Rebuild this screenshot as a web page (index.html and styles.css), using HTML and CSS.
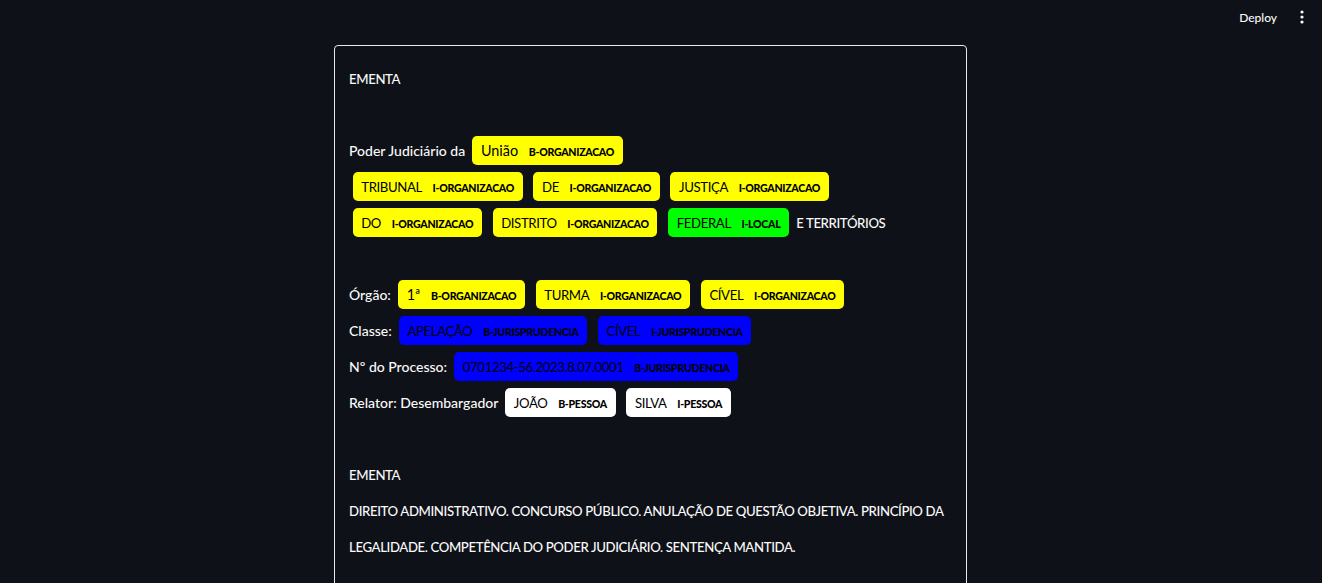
FILE: index.html
```html
<!DOCTYPE html>
<html lang="pt">
<head>
<meta charset="utf-8">
<title>NER</title>
<link rel="stylesheet" href="styles.css">
</head>
<body>
<header class="topbar">
  <span class="deploy">Deploy</span>
  <span class="menu">
    <svg width="4" height="14" viewBox="0 0 4 14"><circle cx="2" cy="2" r="1.6" fill="#fafafa"/><circle cx="2" cy="7" r="1.6" fill="#fafafa"/><circle cx="2" cy="12" r="1.6" fill="#fafafa"/></svg>
  </span>
</header>
<main class="main">
  <div class="card">
    <div class="entities"><span class="caps">EMENTA</span><br><br>Poder Judiciário da <mark class="entity org">União <span class="label">B-ORGANIZACAO</span></mark><br><mark class="entity org"><span class="caps">TRIBUNAL</span> <span class="label">I-ORGANIZACAO</span></mark> <mark class="entity org"><span class="caps">DE</span> <span class="label">I-ORGANIZACAO</span></mark> <mark class="entity org"><span class="caps">JUSTIÇA</span> <span class="label">I-ORGANIZACAO</span></mark><br><mark class="entity org"><span class="caps">DO</span> <span class="label">I-ORGANIZACAO</span></mark> <mark class="entity org"><span class="caps">DISTRITO</span> <span class="label">I-ORGANIZACAO</span></mark> <mark class="entity loc"><span class="caps">FEDERAL</span> <span class="label">I-LOCAL</span></mark> <span class="caps">E TERRITÓRIOS</span><br><br>Órgão: <mark class="entity org">1ª <span class="label">B-ORGANIZACAO</span></mark> <mark class="entity org"><span class="caps">TURMA</span> <span class="label">I-ORGANIZACAO</span></mark> <mark class="entity org"><span class="caps">CÍVEL</span> <span class="label">I-ORGANIZACAO</span></mark><br>Classe: <mark class="entity jur"><span class="caps">APELAÇÃO</span> <span class="label">B-JURISPRUDENCIA</span></mark> <mark class="entity jur"><span class="caps">CÍVEL</span> <span class="label">I-JURISPRUDENCIA</span></mark><br>Nº do Processo: <mark class="entity jur"><span class="caps">0701234-56.2023.8.07.0001</span> <span class="label">B-JURISPRUDENCIA</span></mark><br>Relator: Desembargador <mark class="entity pes"><span class="caps">JOÃO</span> <span class="label">B-PESSOA</span></mark> <mark class="entity pes"><span class="caps">SILVA</span> <span class="label">I-PESSOA</span></mark><br><br><span class="caps">EMENTA</span><br><span class="caps">DIREITO ADMINISTRATIVO. CONCURSO PÚBLICO. ANULAÇÃO DE QUESTÃO OBJETIVA. PRINCÍPIO DA</span><br><span class="caps">LEGALIDADE. COMPETÊNCIA DO PODER JUDICIÁRIO. SENTENÇA MANTIDA.</span><br><br></div>
  </div>
</main>
</body>
</html>
```
FILE: styles.css
```css
html, body {
  margin: 0;
  padding: 0;
  height: 100%;
  overflow: hidden;
  background: #0e1117;
  color: #fafafa;
  font-family: Lato, "Noto Sans", sans-serif;
}

.topbar {
  position: absolute;
  top: 0;
  right: 0;
  height: 34px;
  display: flex;
  align-items: center;
  gap: 23px;
  padding-right: 18px;
}

.deploy {
  font-size: 12px;
  font-weight: 500;
  color: #fafafa;
}

.menu {
  display: flex;
  align-items: center;
}

.main {
  display: flex;
  justify-content: center;
  padding: 45px 21px 0 0;
}

.card {
  width: 603px;
  border: 1px solid #e6e9ef;
  border-radius: 4px;
  padding: 15px 14.4px 14.4px;
  font-size: 14px;
  font-weight: 500;
}

.entities {
  line-height: 36px;
  white-space: nowrap;
}

.caps {
  font-size: 13.2px;
  letter-spacing: -0.38px;
}

.entity {
  font-size: 14.4px;
  font-weight: 400;
  color: #000;
  padding: 0.45em 0.6em;
  margin: 0 0.25em;
  line-height: 1;
  border-radius: 0.35em;
}

.org { background: #ffff00; }
.loc { background: #00ff00; }
.jur { background: #0000ff; }
.pes { background: #ffffff; }

.label {
  font-size: 10.6px;
  font-weight: 900;
  letter-spacing: -0.3px;
  line-height: 1;
  vertical-align: middle;
  margin-left: 7px;
  color: #000;
}
```
